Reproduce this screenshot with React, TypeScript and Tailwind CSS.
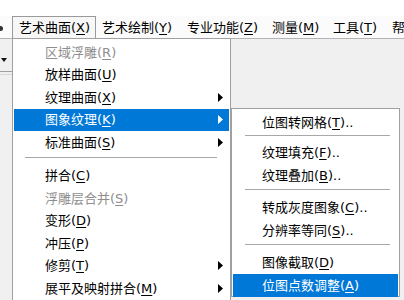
import React from "react";

type Item =
  | { sep: true; h: string }
  | { label: string; key: string; suffix?: string; disabled?: boolean; arrow?: boolean; active?: boolean };

const mainItems: Item[] = [
  { label: "区域浮雕", key: "R", disabled: true },
  { label: "放样曲面", key: "U" },
  { label: "纹理曲面", key: "X", arrow: true },
  { label: "图象纹理", key: "K", arrow: true, active: true },
  { label: "标准曲面", key: "S", arrow: true },
  { sep: true, h: "h-[11px] pt-[3px]" },
  { label: "拼合", key: "C" },
  { label: "浮雕层合并", key: "S", disabled: true },
  { label: "变形", key: "D" },
  { label: "冲压", key: "P" },
  { label: "修剪", key: "T", arrow: true },
  { label: "展平及映射拼合", key: "M", arrow: true },
];

const subItems: Item[] = [
  { label: "位图转网格", key: "T", suffix: ".." },
  { sep: true, h: "h-[8px] pt-[1px]" },
  { label: "纹理填充", key: "F", suffix: ".." },
  { label: "纹理叠加", key: "B", suffix: ".." },
  { sep: true, h: "h-[10px] pt-[2px]" },
  { label: "转成灰度图象", key: "C", suffix: ".." },
  { label: "分辨率等同", key: "S", suffix: ".." },
  { sep: true, h: "h-[10px] pt-[2px]" },
  { label: "图像截取", key: "D" },
  { label: "位图点数调整", key: "A", active: true },
];

function Label({ label, k, suffix }: { label: string; k: string; suffix?: string }) {
  return (
    <span className="whitespace-nowrap">
      {label}(<span className="underline underline-offset-2 decoration-1">{k}</span>){suffix}
    </span>
  );
}

function Arrow({ white }: { white?: boolean }) {
  return (
    <svg width="5" height="9" viewBox="0 0 5 9" className="shrink-0">
      <polygon points="0,0 5,4.5 0,9" fill={white ? "#ffffff" : "#000000"} />
    </svg>
  );
}

function MenuList({ items, pl, sepL, sepR }: { items: Item[]; pl: string; sepL: string; sepR: string }) {
  return (
    <>
      {items.map((it, i) => {
        if ("sep" in it) {
          return (
            <div key={i} className={`${it.h} flex flex-col justify-start ${sepL} ${sepR}`}>
              <div className="h-px w-full bg-[#a8a8a8]" />
            </div>
          );
        }
        return (
          <div
            key={i}
            className={`mx-[1px] h-[22.5px] flex items-center justify-between ${pl} pr-[6px] ${
              it.active ? "bg-[#0078d7] text-white" : it.disabled ? "text-[#8e8e8e]" : "text-black"
            }`}
          >
            <Label label={it.label} k={it.key} suffix={it.suffix} />
            {it.arrow ? <Arrow white={it.active} /> : null}
          </div>
        );
      })}
    </>
  );
}

export default function App() {
  const font = "font-['DejaVu_Sans','Noto_Sans_CJK_SC',sans-serif]";
  return (
    <div className={`relative w-[404px] h-[300px] overflow-hidden bg-[#f0f0f0] text-[13px] leading-none ${font}`}>
      {/* top white strip */}
      <div className="h-[16px] bg-white" />
      {/* menu bar */}
      <div className="h-[22px] bg-[#fbfbfb] border-b border-[#b4b4b4] flex items-stretch box-content">
        <div className="w-[12px] shrink-0 relative">
          <div className="absolute left-0 top-[10px] w-[3px] h-[5px] bg-[#333] rounded-r-sm" />
        </div>
        <div className="w-[84px] shrink-0 pl-[6px] flex items-center border border-b-0 border-[#9a9a9a] bg-[#f7f7f7]">
          <Label label="艺术曲面" k="X" />
        </div>
        <div className="w-[85px] shrink-0 pl-[6px] flex items-center">
          <Label label="艺术绘制" k="Y" />
        </div>
        <div className="w-[85px] shrink-0 pl-[6px] flex items-center">
          <Label label="专业功能" k="Z" />
        </div>
        <div className="w-[61px] shrink-0 pl-[6px] flex items-center">
          <Label label="测量" k="M" />
        </div>
        <div className="w-[59px] shrink-0 pl-[6px] flex items-center">
          <Label label="工具" k="T" />
        </div>
        <div className="shrink-0 pl-[6px] flex items-center whitespace-nowrap">帮助(H)</div>
      </div>
      {/* left toolbar strip */}
      <div className="w-[12px] flex flex-col">
        <div className="h-[32px] flex items-end pl-[1px] pb-[9px]">
          <svg width="6" height="4" viewBox="0 0 6 4">
            <polygon points="0,0 6,0 3,4" fill="#111" />
          </svg>
        </div>
        <div className="h-px bg-[#a0a0a0]" />
        <div className="h-[2px]" />
        <div className="h-px bg-[#d8d8d8]" />
      </div>

      {/* main dropdown */}
      <div className="absolute left-[12px] top-[38px] w-[219px] h-[280px] bg-white border border-[#a0a0a0] pt-[2px]">
        <MenuList items={mainItems} pl="pl-[31px]" sepL="ml-[12px]" sepR="mr-[13px]" />
      </div>

      {/* submenu */}
      <div className="absolute left-[231px] top-[108px] w-[169px] h-[189px] bg-white border border-[#a0a0a0] pt-[2px]">
        <MenuList items={subItems} pl="pl-[29px]" sepL="ml-[13px]" sepR="mr-[9px]" />
      </div>
    </div>
  );
}
